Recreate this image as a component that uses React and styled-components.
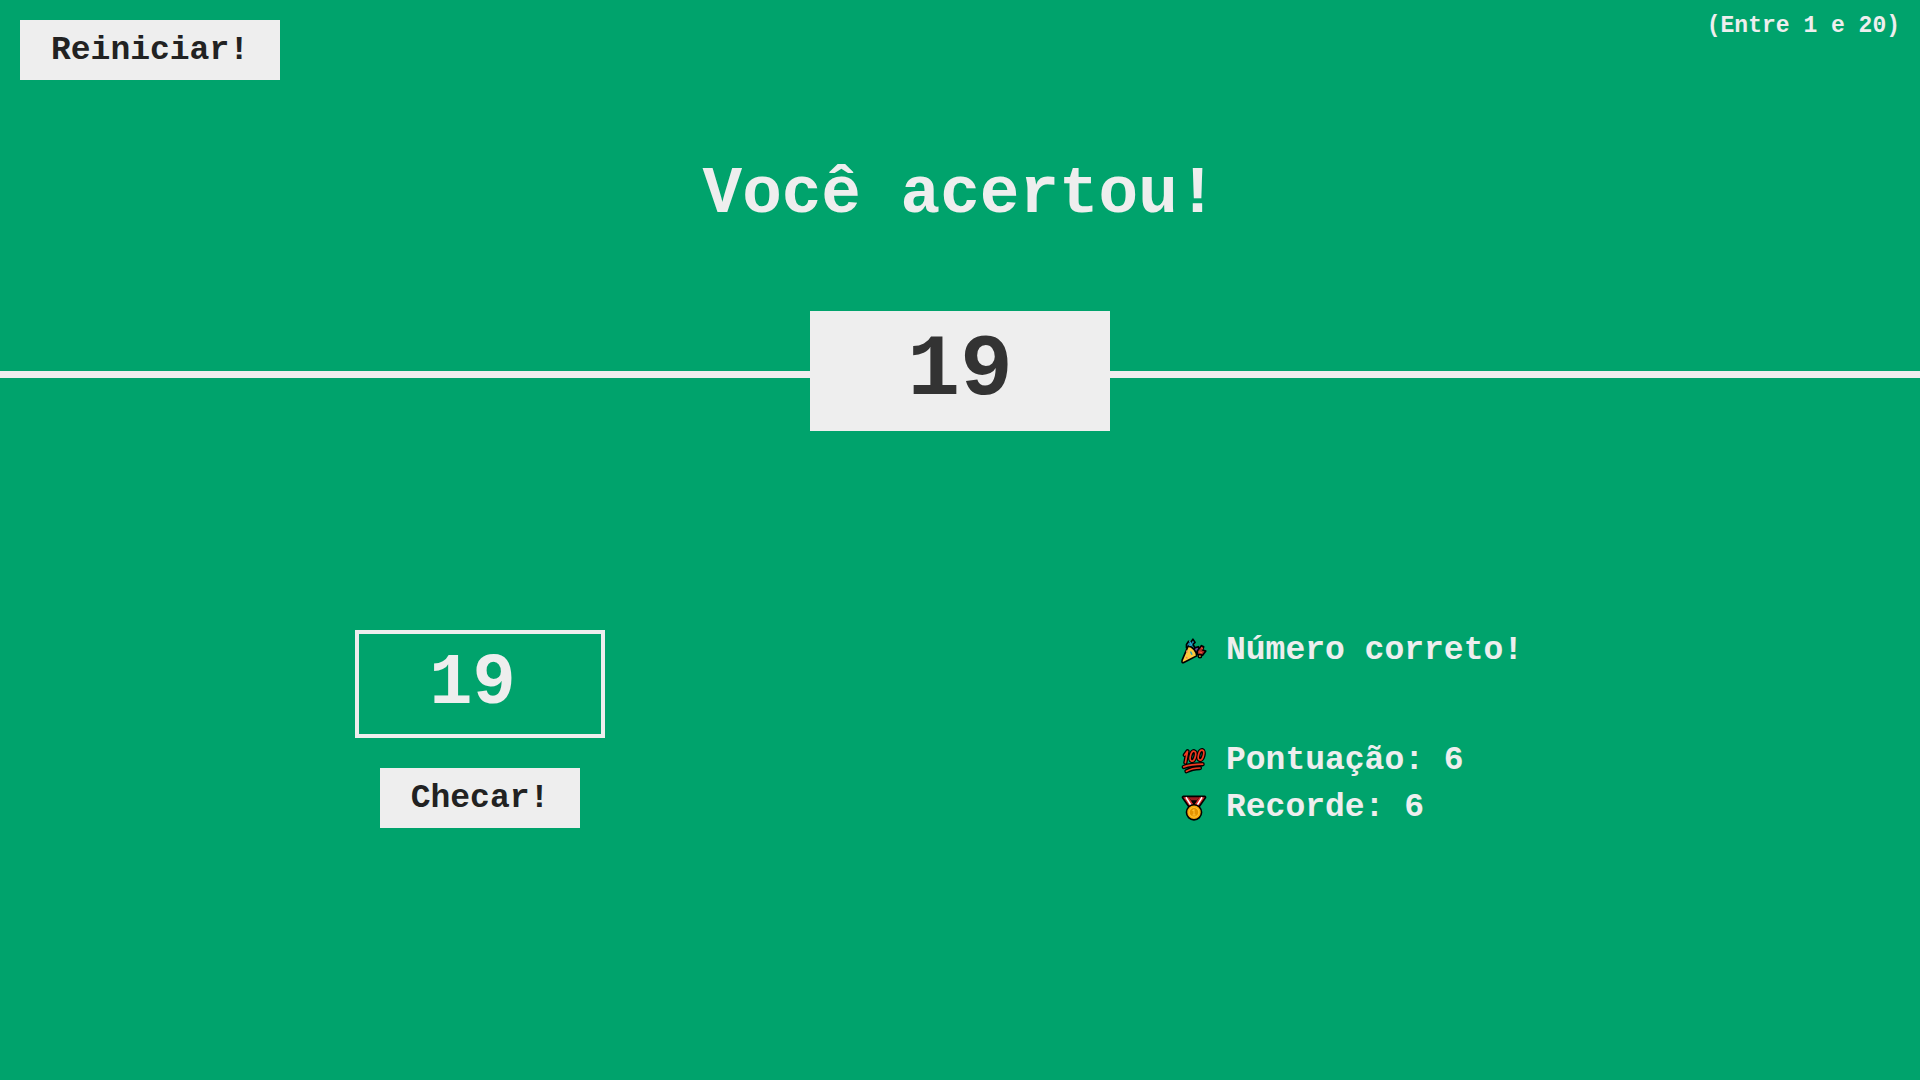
import React, { useState } from "react";
import styled, { createGlobalStyle } from "styled-components";

const LIGHT = "#eee";
const GREEN = "#00a36c";

const GlobalStyle = createGlobalStyle`
  *, *::before, *::after {
    box-sizing: border-box;
    margin: 0;
    padding: 0;
  }
  body {
    background: ${GREEN};
    color: ${LIGHT};
    font-family: "Liberation Mono", "Courier New", monospace;
    font-size: 33px;
    font-weight: 700;
  }
`;

const Page = styled.div`
  min-height: 100vh;
`;

const Header = styled.header`
  position: relative;
  min-height: 35vh;
  border-bottom: 7px solid ${LIGHT};
`;

const TopBar = styled.div`
  display: flex;
  justify-content: space-between;
  align-items: flex-start;
  padding: 20px 20px 0;
`;

const Button = styled.button`
  height: 60px;
  padding: 0 31px;
  border: none;
  background: ${LIGHT};
  color: #222;
  font: inherit;
  cursor: pointer;

  &:hover {
    background: #ccc;
  }
`;

const Range = styled.p`
  font-size: 23px;
  line-height: 13px;
`;

const Title = styled.h1`
  padding-top: 75px;
  font-size: 66px;
  line-height: 80px;
  text-align: center;
`;

const SecretNumber = styled.div`
  position: absolute;
  top: 100%;
  left: 50%;
  width: 300px;
  height: 120px;
  transform: translate(-50%, -50%);
  background: ${LIGHT};
  color: #333;
  font-size: 88px;
  line-height: 120px;
  text-align: center;
`;

const Main = styled.main`
  display: grid;
  grid-template-columns: 1fr 1fr;
  justify-items: center;
  align-items: center;
  min-height: 65vh;
`;

const GuessForm = styled.form`
  display: flex;
  flex-direction: column;
  align-items: center;
  gap: 30px;
`;

const GuessInput = styled.input`
  width: 250px;
  height: 108px;
  border: 4px solid ${LIGHT};
  background: none;
  color: inherit;
  font: inherit;
  font-size: 72px;
  text-align: center;
  outline: none;
`;

const Status = styled.section`
  width: 520px;
`;

const StatusRow = styled.p`
  display: flex;
  align-items: center;
  gap: 18px;
  margin-bottom: ${({ $spaced }) => ($spaced ? "63px" : "0")};
  line-height: 47px;
`;

const Icon = styled.svg`
  flex: none;
  width: 28px;
  height: 28px;
`;

function PartyIcon() {
  return (
    <Icon viewBox="0 0 26 26" aria-hidden="true" strokeLinecap="round" strokeLinejoin="round">
      <g stroke="#000" strokeWidth="1.5">
        <path d="M6 7 8 4l2 1 2-3 2 3-2 2 2 3-3 3-3-2-2-1z" fill="#1687a7" />
        <path d="m14 10 3-1 1 3-3 3-3-2z" fill="#6947a0" />
        <path d="m16 13 4-5 2 1-1 3 3 1-3 4-5-1z" fill="#ab2c26" />
        <circle cx="18.500" cy="17.800" r="1.500" fill="#f4c430" />
        <path d="M7.500 8.500c4 0 8 5 8 9L4 23.500c-2 1-2.500 0-2-2z" fill="#ffc83d" />
      </g>
      <path d="m9 4 1 2m1 1-2 1" fill="none" stroke="#2bb3df" strokeWidth="1" />
      <path d="m10 14 1 2" stroke="#249fc6" strokeWidth="1.300" />
      <path d="m6 13 .5 1M6 19l.5.5" stroke="#f27b58" strokeWidth="1.200" />
      <path d="m20 10 1 1m-3 3 2 .5" stroke="#f15a3a" strokeWidth="1" />
    </Icon>
  );
}

function HundredMarks() {
  return (
    <>
      <path d="M4.500 7.500 7 4 5 14.500" />
      <ellipse cx="12" cy="8.500" rx="2.300" ry="4.700" transform="rotate(15 12 8.500)" />
      <ellipse cx="19.500" cy="7.500" rx="2.300" ry="4.700" transform="rotate(15 19.500 7.500)" />
      <path d="M3.500 18.500C9 16.500 15 16 21 16" />
      <path d="M18.500 19.500c-5 0-8 .5-12.500 3" />
    </>
  );
}

function HundredIcon() {
  return (
    <Icon viewBox="0 0 26 26" aria-hidden="true" fill="none" strokeLinecap="round" strokeLinejoin="round">
      <g stroke="#000" strokeWidth="4">
        <HundredMarks />
      </g>
      <g stroke="#ef3b20" strokeWidth="1.600">
        <HundredMarks />
      </g>
    </Icon>
  );
}

function MedalIcon() {
  return (
    <Icon viewBox="0 0 26 26" aria-hidden="true" strokeLinejoin="round">
      <path d="M3 3h20l-7 10h-6z" fill="#000" stroke="#000" strokeWidth="3" />
      <path d="M8 3h10l-2.500 3h-5z" fill="#9b1c20" />
      <path d="M3 3h5l6 9-4 1z" fill="#d82c2c" />
      <path d="M23 3h-5l-6 9 4 1z" fill="#d82c2c" />
      <path d="m5.500 3 5 8M20.500 3l-5 8" stroke="#fff" strokeWidth="1.400" />
      <path d="m10.500 6 2.500 4 2.500-4z" fill="#000" />
      <circle cx="13" cy="17" r="7" fill="#f9a90a" stroke="#000" strokeWidth="1.500" />
      <circle cx="13" cy="17" r="4.500" fill="#e39300" stroke="#ffc12f" />
      <path d="m11.500 15.500 1.500-1v5m-1.500 0h3" fill="none" stroke="#ffc12f" />
    </Icon>
  );
}

export default function App() {
  const [guess, setGuess] = useState("19");

  return (
    <Page>
      <GlobalStyle />
      <Header>
        <TopBar>
          <Button type="button" onClick={() => setGuess("")}>Reiniciar!</Button>
          <Range>(Entre 1 e 20)</Range>
        </TopBar>
        <Title>Você acertou!</Title>
        <SecretNumber>19</SecretNumber>
      </Header>
      <Main>
        <GuessForm onSubmit={(event) => event.preventDefault()}>
          <GuessInput
            type="number"
            aria-label="Número"
            value={guess}
            onChange={(event) => setGuess(event.target.value)}
          />
          <Button type="submit">Checar!</Button>
        </GuessForm>
        <Status>
          <StatusRow $spaced>
            <PartyIcon />
            <span>Número correto!</span>
          </StatusRow>
          <StatusRow>
            <HundredIcon />
            <span>Pontuação: 6</span>
          </StatusRow>
          <StatusRow>
            <MedalIcon />
            <span>Recorde: 6</span>
          </StatusRow>
        </Status>
      </Main>
    </Page>
  );
}
